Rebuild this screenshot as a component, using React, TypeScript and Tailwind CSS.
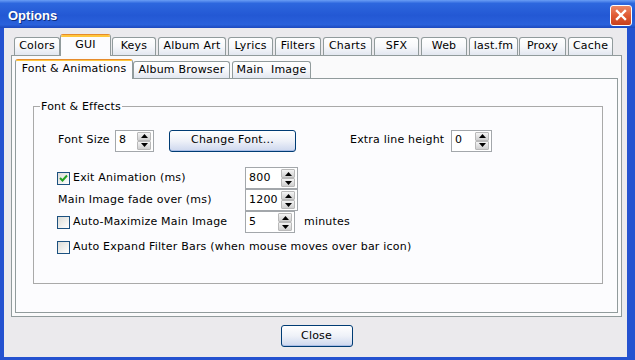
import React from "react";

type TabDef = { label: string; cls: string; active?: boolean };

const outerTabs: TabDef[] = [
  { label: "Colors", cls: "w-[46px]" },
  { label: "GUI", cls: "w-[51px]", active: true },
  { label: "Keys", cls: "ml-[1px] w-[44px]" },
  { label: "Album Art", cls: "ml-[2px] w-[68px]" },
  { label: "Lyrics", cls: "ml-[2px] w-[45px]" },
  { label: "Filters", cls: "ml-[2px] w-[46px]" },
  { label: "Charts", cls: "ml-[2px] w-[49px]" },
  { label: "SFX", cls: "ml-[2px] w-[45px]" },
  { label: "Web", cls: "ml-[2px] w-[46px]" },
  { label: "last.fm", cls: "ml-[2px] w-[49px]" },
  { label: "Proxy", cls: "ml-[1px] w-[47px]" },
  { label: "Cache", cls: "ml-[2px] w-[45px]" },
];

const innerTabs: TabDef[] = [
  { label: "Font & Animations", cls: "w-[118px]", active: true },
  { label: "Album Browser", cls: "w-[97px]" },
  { label: "Main  Image", cls: "ml-[2px] w-[79px]" },
];

function Tab({ tab, tall }: { tab: TabDef; tall: string }) {
  if (tab.active) {
    return (
      <div
        className={`${tab.cls} ${tall} -mb-px relative z-10 flex flex-col bg-[#fcfcfe] border border-b-0 border-[#919b9c] border-t-[#e68b2c] rounded-t-[3px]`}
      >
        <div className="h-[2px] bg-[#ffc73c] rounded-t-[2px]" />
        <div className="flex-1 flex items-center justify-center whitespace-pre pb-[2px]">{tab.label}</div>
      </div>
    );
  }
  return (
    <div
      className={`${tab.cls} flex items-center justify-center whitespace-pre border border-b-0 border-[#919b9c] rounded-t-[3px] bg-gradient-to-b from-white via-[#f7f8fb] to-[#e2e7f0]`}
    >
      {tab.label}
    </div>
  );
}

function Arrow({ up }: { up?: boolean }) {
  return (
    <div className="flex-1 flex items-center justify-center bg-gradient-to-b from-[#f4f4f4] to-[#cfcfcf] border border-[#b9b9b9] rounded-[1px]">
      <svg width="7" height="4" viewBox="0 0 7 4">
        <polygon points={up ? "3.5,0 7,4 0,4" : "0,0 7,0 3.5,4"} fill="#000" />
      </svg>
    </div>
  );
}

function Spin({ value, w }: { value: string; w: string }) {
  return (
    <div className={`${w} h-[22px] flex items-center border border-[#a3a7ab] bg-white pl-[3px] pr-[2px]`}>
      <span className="flex-1">{value}</span>
      <div className="w-[14px] h-[18px] flex flex-col">
        <Arrow up />
        <Arrow />
      </div>
    </div>
  );
}

function Check({ checked }: { checked?: boolean }) {
  return (
    <div className="w-[13px] h-[13px] -ml-px mr-[3px] flex items-center justify-center border border-[#1c5180] bg-gradient-to-br from-[#dcdcd7] to-white shrink-0">
      {checked && (
        <svg width="9" height="9" viewBox="0 0 9 9">
          <polyline points="1,4 3.5,6.5 8,1.5" fill="none" stroke="#21a121" strokeWidth="2" />
        </svg>
      )}
    </div>
  );
}

function XpButton({ label, w }: { label: string; w: string }) {
  return (
    <button
      className={`${w} h-[22px] flex items-center justify-center border border-[#003c74] rounded-[3px] bg-gradient-to-b from-white via-[#eef1f8] to-[#cdd7ee] shadow-[inset_0_-1px_0_#a9bde6]`}
    >
      {label}
    </button>
  );
}

export default function App() {
  return (
    <div className="w-[635px] h-[360px] flex flex-col bg-[#2452d0] overflow-hidden font-['DejaVu_Sans',Verdana,sans-serif] text-[11px] tracking-[0.2px] text-black">
      {/* title bar */}
      <div className="h-[28px] flex items-center justify-between pl-[8px] pr-[3px] bg-[linear-gradient(180deg,#6a9ef5_0%,#2d67de_12%,#2358d4_55%,#2a61db_88%,#1c48bd_100%)]">
        <span className="pt-[3px] font-['Liberation_Sans',Arial,sans-serif] font-bold text-[13px] tracking-normal text-white [text-shadow:1px_1px_0_#0f2f80]">
          Options
        </span>
        <div className="w-[22px] h-[21px] mt-[2px] flex items-center justify-center rounded-[3px] border border-white bg-gradient-to-b from-[#ec8866] via-[#e05a33] to-[#c8401c]">
          <svg width="12" height="12" viewBox="0 0 12 12">
            <path d="M2 2 L10 10 M10 2 L2 10" stroke="#fff" strokeWidth="2.4" strokeLinecap="square" />
          </svg>
        </div>
      </div>

      {/* client area */}
      <div className="flex-1 ml-[4px] mr-[8px] mb-[3px] flex flex-col bg-[#ebeaed] pt-[6px] pl-[7px] pr-[5px]">
        <div className="h-[21px] flex items-end pl-[3px]">
          {outerTabs.map((t) => (
            <div key={t.label} className="contents [&>div]:h-[18px]">
              <Tab tab={t} tall="!h-[22px]" />
            </div>
          ))}
        </div>

        <div className="h-[262px] flex flex-col border border-[#919b9c] bg-[#fafafb] p-[3px]">
          <div className="h-[19px] flex items-end">
            {innerTabs.map((t) => (
              <div key={t.label} className="contents [&>div]:h-[17px]">
                <Tab tab={t} tall="!h-[20px]" />
              </div>
            ))}
          </div>

          <div className="flex-1 border border-[#919b9c] bg-[#fcfcfe] pt-[21px] pl-[17px] pr-[14px]">
            <fieldset className="h-[184px] border border-[#a9a9a9] px-[6px]">
              <legend className="px-px leading-[13px]">Font &amp; Effects</legend>
              <div className="pt-[16px] pl-[18px]">
                <div className="h-[23px] flex items-center">
                  <span className="w-[57px]">Font Size</span>
                  <Spin value="8" w="w-[39px]" />
                  <div className="ml-[15px]">
                    <XpButton label="Change Font..." w="w-[127px]" />
                  </div>
                  <span className="ml-[54px] w-[101px]">Extra line height</span>
                  <Spin value="0" w="w-[41px]" />
                </div>

                <div className="mt-[15px] grid grid-cols-[187px_auto_1fr] items-center">
                  <div className="h-[22px] flex items-center">
                    <Check checked />
                    <span>Exit Animation (ms)</span>
                  </div>
                  <Spin value="800" w="w-[53px]" />
                  <div />

                  <div className="h-[22px] flex items-center">
                    <span>Main Image fade over (ms)</span>
                  </div>
                  <Spin value="1200" w="w-[53px]" />
                  <div />

                  <div className="h-[22px] flex items-center">
                    <Check />
                    <span>Auto-Maximize Main Image</span>
                  </div>
                  <Spin value="5" w="w-[50px]" />
                  <span className="pl-[6px]">minutes</span>
                </div>

                <div className="mt-[3px] h-[22px] flex items-center">
                  <Check />
                  <span>Auto Expand Filter Bars (when mouse moves over bar icon)</span>
                </div>
              </div>
            </fieldset>
          </div>
        </div>

        <div className="flex justify-center pt-[8px]">
          <XpButton label="Close" w="w-[72px]" />
        </div>
      </div>
    </div>
  );
}
